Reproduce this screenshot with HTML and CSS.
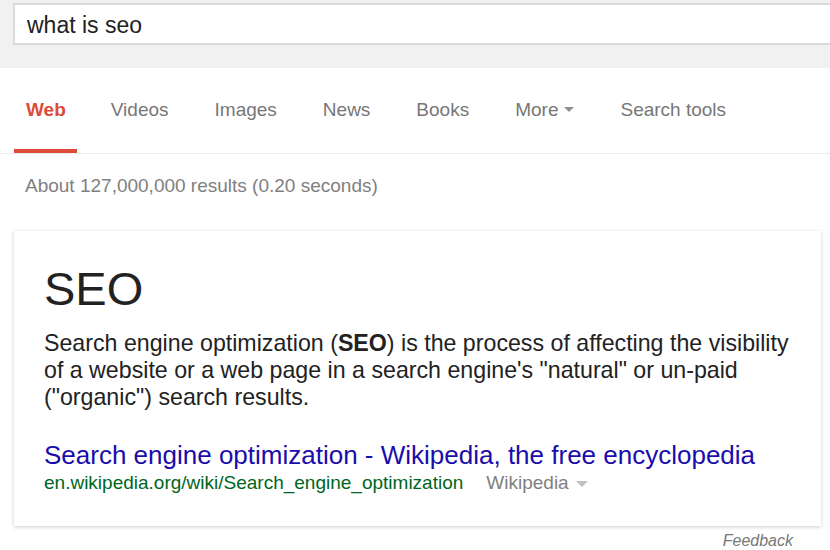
FILE: index.html
```html
<!DOCTYPE html>
<html>
<head>
<meta charset="utf-8">
<link rel="stylesheet" href="styles.css">
</head>
<body>
<header class="top">
  <div class="searchbox">what is seo</div>
</header>
<nav class="tabs">
  <div class="tab active">Web</div>
  <div class="tab">Videos</div>
  <div class="tab">Images</div>
  <div class="tab">News</div>
  <div class="tab">Books</div>
  <div class="tab">More <span class="caret"></span></div>
  <div class="tab">Search tools</div>
</nav>
<div class="stats">About 127,000,000 results (0.20 seconds)</div>
<section class="card">
  <h1 class="title">SEO</h1>
  <p class="desc">Search engine optimization (<b>SEO</b>) is the process of affecting the visibility of a website or a web page in a search engine's "natural" or un-paid ("organic") search results.</p>
  <a class="link" href="#">Search engine optimization - Wikipedia, the free encyclopedia</a>
  <div class="cite"><span class="url">en.wikipedia.org/wiki/Search_engine_optimization</span><span class="src">Wikipedia <span class="caret small"></span></span></div>
</section>
<div class="feedback">Feedback</div>
</body>
</html>
```
FILE: styles.css
```css
html, body {
  margin: 0;
  padding: 0;
  background: #fff;
  font-family: "Liberation Sans", Arial, sans-serif;
  overflow: hidden;
}
.top {
  background: #f1f1f1;
  height: 68px;
  padding-top: 3px;
  box-sizing: border-box;
}
.searchbox {
  margin-left: 13px;
  width: 840px;
  height: 42px;
  box-sizing: border-box;
  background: #fff;
  border: 2px solid #d9d9d9;
  border-right: none;
  font-size: 23px;
  color: #222;
  line-height: 40px;
  padding-left: 12px;
}
.tabs {
  display: flex;
  gap: 22px;
  height: 86px;
  border-bottom: 1px solid #ebebeb;
  box-sizing: border-box;
  padding-left: 14px;
}
.tab {
  padding: 0 12px;
  font-size: 19px;
  color: #777;
  line-height: 1;
  padding-top: 32px;
  box-sizing: border-box;
  height: 85px;
  border-bottom: 4px solid transparent;
  display: flex;
  align-items: flex-start;
  gap: 6px;
}
.tab.active {
  color: #dd4b39;
  font-weight: bold;
  border-bottom-color: #dd4b39;
  padding-right: 11px;
}
.caret {
  display: inline-block;
  width: 0;
  height: 0;
  border-left: 5px solid transparent;
  border-right: 5px solid transparent;
  border-top: 5px solid #909090;
  margin-top: 7px;
}
.stats {
  font-size: 19px;
  color: #808080;
  padding-left: 25px;
  padding-top: 21px;
  height: 77px;
  box-sizing: border-box;
}
.card {
  margin-left: 14px;
  width: 807px;
  height: 295px;
  box-sizing: border-box;
  background: #fff;
  box-shadow: 0 1px 4px rgba(0,0,0,0.2);
  padding: 32px 30px 0 30px;
}
.title {
  margin: 0;
  font-weight: normal;
  font-size: 47px;
  color: #222;
  line-height: 52px;
}
.desc {
  margin: 15px 0 0 0;
  font-size: 23.2px;
  line-height: 27px;
  color: #222;
}
.link {
  display: block;
  margin-top: 29px;
  font-size: 26px;
  line-height: 30px;
  color: #1a0dab;
  text-decoration: none;
}
.cite {
  display: flex;
  align-items: center;
  font-size: 19px;
  line-height: 22px;
  margin-top: 2px;
}
.url { color: #006621; }
.src {
  color: #808080;
  margin-left: 23px;
  display: flex;
  align-items: center;
  gap: 7px;
}
.caret.small {
  border-left-width: 6px;
  border-right-width: 6px;
  border-top: 6px solid #c0c0c0;
  margin-top: 2px;
}
.feedback {
  font-size: 16px;
  font-style: italic;
  color: #777;
  text-align: right;
  width: 793px;
  margin-top: 6px;
}
```
